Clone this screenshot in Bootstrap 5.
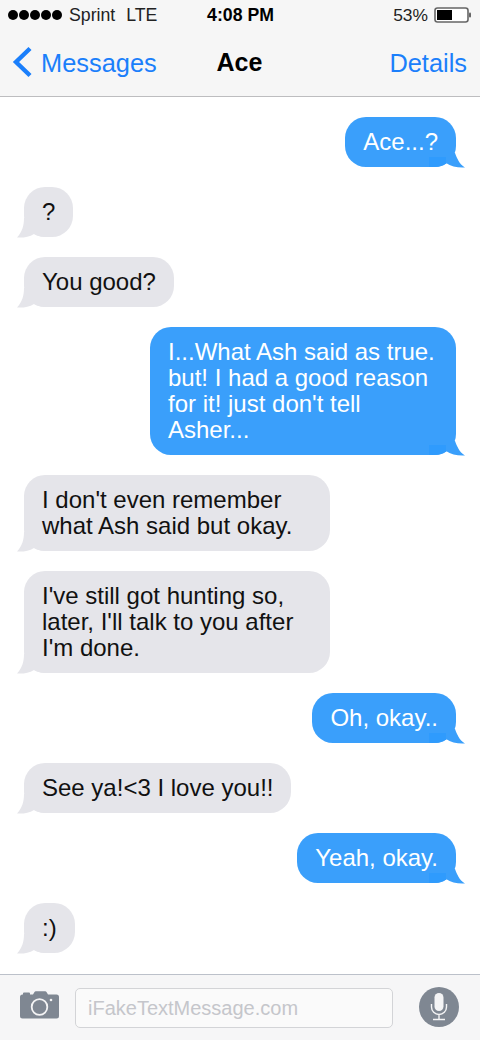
<!DOCTYPE html>
<html lang="en">
<head>
    <meta charset="UTF-8">
    <meta name="viewport" content="width=device-width, initial-scale=1.0">
    <title>Ace</title>
    <link href="https://cdn.jsdelivr.net/npm/bootstrap@5.3.0/dist/css/bootstrap.min.css" rel="stylesheet">
    <style>
        body {
            background-color: #fff;
            font-family: "Liberation Sans", Arial, sans-serif;
            color: #000;
        }

        .phone {
            width: 480px;
            height: 1040px;
            overflow: hidden;
        }

        .top-area {
            height: 97px;
            background-color: #f6f6f6;
            border-bottom: 1px solid #bdbdbf;
        }

        .status-row {
            height: 32px;
            padding: 0 8px 2px 8px;
            font-size: 17.7px;
            color: #222;
        }

        .status-side {
            width: 170px;
        }

        .dots {
            gap: 1px;
            margin-right: 7px;
        }

        .dot {
            width: 10px;
            height: 10px;
            border-radius: 50%;
            background-color: #000;
        }

        .carrier-gap {
            margin-left: 11px;
        }

        .clock {
            color: #000;
            font-weight: 700;
            margin-left: 1px;
        }

        .battery-text {
            margin-right: 6px;
            font-size: 17.4px;
        }

        .title-row {
            height: 64px;
            padding: 0 13px 3px 12px;
            font-size: 25.4px;
            color: #1b7ffb;
        }

        .title-side {
            width: 170px;
        }

        .title-text {
            padding-top: 2px;
        }

        .title-name {
            color: #000;
            font-size: 25px;
            font-weight: 700;
        }

        .thread {
            height: 877px;
            padding: 20px 24px 0;
            gap: 20px;
        }

        .bubble {
            position: relative;
            max-width: 306px;
            padding: 12px 18px;
            border-radius: 21px;
            font-size: 24px;
            line-height: 26px;
        }

        .bubble-text {
            position: relative;
            z-index: 1;
        }

        .bubble-out {
            align-self: flex-end;
            background-color: #3a9ffb;
            color: #fff;
        }

        .bubble-in {
            align-self: flex-start;
            background-color: #e5e5ea;
            color: #111;
        }

        .tail {
            position: absolute;
            bottom: -1px;
            width: 36px;
            height: 20px;
        }

        .tail-out {
            right: -9px;
        }

        .tail-in {
            left: -7px;
        }

        .composer {
            height: 66px;
            background-color: #f6f6f7;
            border-top: 1px solid #bcc1ca;
            padding: 0 21px 0 20px;
        }

        .camera-icon {
            margin-bottom: 6px;
        }

        .fake-input {
            width: 318px;
            height: 40px;
            margin-left: 16px;
            margin-right: 26px;
            padding-left: 12px;
            background-color: #fafafa;
            border: 1px solid #d3d4d7;
            border-radius: 5px;
            color: #c5c6cb;
            font-size: 20px;
        }

        .mic-circle {
            width: 40px;
            height: 40px;
            margin-bottom: 2px;
            border-radius: 50%;
            background-color: #7f8792;
        }
    </style>
</head>
<body>

<div class="phone d-flex flex-column">
    <div class="top-area">
        <div class="status-row d-flex align-items-center justify-content-between">
            <div class="status-side d-flex align-items-center">
                <div class="dots d-flex">
                    <span class="dot"></span><span class="dot"></span><span class="dot"></span><span class="dot"></span><span class="dot"></span>
                </div>
                <span>Sprint</span><span class="carrier-gap">LTE</span>
            </div>
            <div class="clock">4:08 PM</div>
            <div class="status-side d-flex align-items-center justify-content-end">
                <span class="battery-text">53%</span>
                <svg width="38" height="16" viewBox="0 0 38 16">
                    <rect x="1" y="1" width="33" height="14" rx="2.5" fill="#fff" stroke="#666" stroke-width="1.6"/>
                    <rect x="3" y="3" width="15" height="10" fill="#000"/>
                    <rect x="35" y="5.5" width="2" height="5" rx="1" fill="#666"/>
                </svg>
            </div>
        </div>
        <div class="title-row d-flex align-items-center justify-content-between">
            <div class="title-side d-flex align-items-center">
                <svg class="me-2" width="21" height="32" viewBox="0 0 21 32">
                    <path d="M18 2.500 4 16l14 13.500" fill="none" stroke="#1b7ffb" stroke-width="4.400"/>
                </svg>
                <span class="title-text">Messages</span>
            </div>
            <div class="title-name">Ace</div>
            <div class="title-side title-text text-end">Details</div>
        </div>
    </div>

    <div class="thread d-flex flex-column" id="thread"></div>

    <div class="composer d-flex align-items-center">
        <svg class="camera-icon" width="39" height="28" viewBox="0 0 39 28">
            <path d="M3 3.500V2.500a1 1 0 0 1 1-1h5a1 1 0 0 1 1 1v1h3l1.500-2.500a1.500 1.500 0 0 1 1.300-.7h9.400a1.500 1.500 0 0 1 1.300.7L28 3.500h8.500A2.500 2.500 0 0 1 39 6v19a2.500 2.500 0 0 1-2.500 2.500h-34A2.500 2.500 0 0 1 0 25V6a2.500 2.500 0 0 1 2.500-2.500z" fill="#7f8792"/>
            <circle cx="19.500" cy="16" r="7.800" fill="none" stroke="#f4f4f5" stroke-width="1.800"/>
            <circle cx="31" cy="9" r="1.300" fill="#f4f4f5"/>
        </svg>
        <div class="fake-input d-flex align-items-center">iFakeTextMessage.com</div>
        <div class="mic-circle d-flex align-items-center justify-content-center">
            <svg width="20" height="30" viewBox="0 0 20 30">
                <rect x="5.500" y="1" width="9" height="18" rx="4.500" fill="#f4f4f5"/>
                <path d="M2.500 12v3a7.500 7.500 0 0 0 15 0v-3M10 22.500V27M4 27.500h12" fill="none" stroke="#f4f4f5" stroke-width="1.400"/>
            </svg>
        </div>
    </div>
</div>

<script>
    const messages = [
        { out: true, text: 'Ace...?' },
        { out: false, text: '?' },
        { out: false, text: 'You good?' },
        { out: true, text: "I...What Ash said as true. but! I had a good reason for it! just don't tell Asher..." },
        { out: false, text: "I don't even remember what Ash said but okay." },
        { out: false, text: "I've still got hunting so, later, I'll talk to you after I'm done." },
        { out: true, text: 'Oh, okay..' },
        { out: false, text: 'See ya!<3 I love you!!' },
        { out: true, text: 'Yeah, okay.' },
        { out: false, text: ':)' }
    ];

    const tailOut = '<svg class="tail tail-out" viewBox="0 0 36 20"><path d="M0 5h26c2 5 4 11 10 14.500-7 .5-14-1-19-4.500-3 2.500-7 4-17 4z" fill="#3a9ffb"/><path d="M0 9h17v6.500c-4 2-8 3.500-17 3.500z" fill="#2f9bfd"/></svg>';
    const tailIn = '<svg class="tail tail-in" viewBox="0 0 36 20"><path d="M7 0c0 8-2 14-7 19.500 6 .5 12-.5 17-3.500 3 2 8 3 19 3V0z" fill="#e5e5ea"/></svg>';

    const thread = document.getElementById('thread');
    messages.forEach(function (m) {
        const div = document.createElement('div');
        div.className = 'bubble ' + (m.out ? 'bubble-out' : 'bubble-in');
        const span = document.createElement('span');
        span.className = 'bubble-text';
        span.textContent = m.text;
        div.appendChild(span);
        div.insertAdjacentHTML('beforeend', m.out ? tailOut : tailIn);
        thread.appendChild(div);
    });
</script>
<script src="https://cdn.jsdelivr.net/npm/bootstrap@5.3.0/dist/js/bootstrap.bundle.min.js"></script>

</body>
</html>
